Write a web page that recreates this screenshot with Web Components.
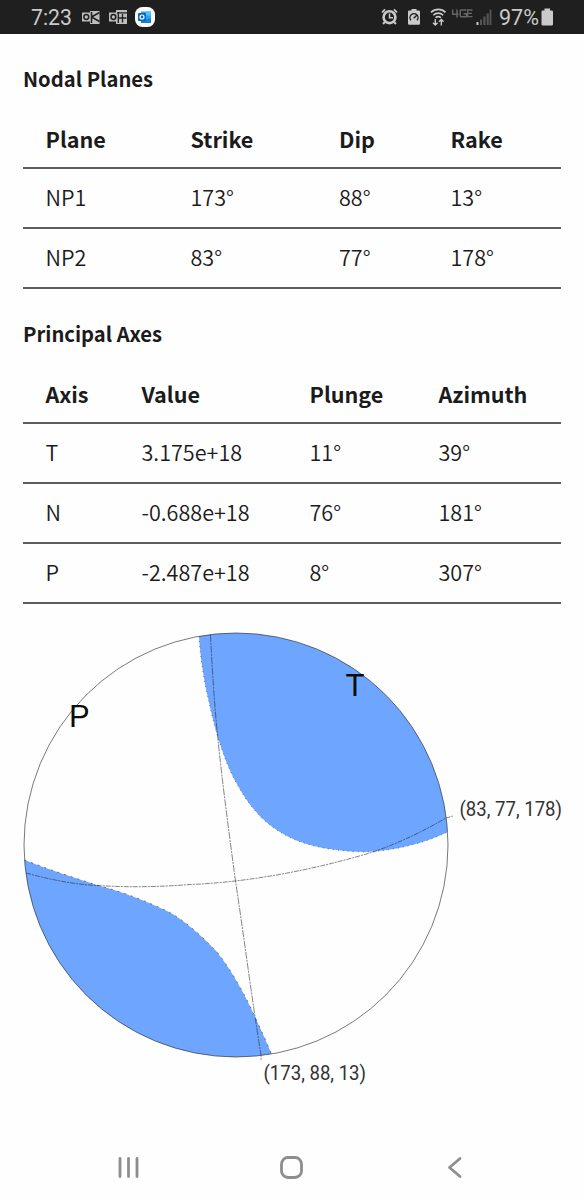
<!DOCTYPE html>
<html lang="en">
<head>
<meta charset="utf-8">
<title>Moment Tensor</title>
<style>
  body {
    margin: 0;
    background: #fefefe;
    color: #1b1b1b;
    font-family: "Noto Sans CJK SC", "Open Sans", sans-serif;
  }
</style>
</head>
<body>
<tensor-screen>
  <status-bar slot="top" time="7:23" battery="97%"></status-bar>
  <data-table heading="Nodal Planes" columns="145px 148.5px 111.5px 1fr">
    <script type="application/json">
      [["Plane", "Strike", "Dip", "Rake"],
       ["NP1", "173°", "88°", "13°"],
       ["NP2", "83°", "77°", "178°"]]
    </script>
  </data-table>
  <data-table heading="Principal Axes" columns="96px 168px 129px 1fr">
    <script type="application/json">
      [["Axis", "Value", "Plunge", "Azimuth"],
       ["T", "3.175e+18", "11°", "39°"],
       ["N", "-0.688e+18", "76°", "181°"],
       ["P", "-2.487e+18", "8°", "307°"]]
    </script>
  </data-table>
  <beach-ball></beach-ball>
  <nav-bar slot="bottom"></nav-bar>
</tensor-screen>

<script>
class TensorScreen extends HTMLElement {
  constructor() {
    super();
    this.attachShadow({ mode: "open" });
    this.shadowRoot.innerHTML = `
      <style>
        :host {
          display: flex;
          flex-direction: column;
          height: 1200px;
          overflow: hidden;
        }
        main {
          flex: 1;
          display: flex;
          flex-direction: column;
          padding: 30px 23px 0;
        }
      </style>
      <slot name="top"></slot>
      <main><slot></slot></main>
      <slot name="bottom"></slot>
    `;
  }
}

class StatusBar extends HTMLElement {
  constructor() {
    super();
    this.attachShadow({ mode: "open" });
    this.shadowRoot.innerHTML = `
      <style>
        :host {
          display: block;
          height: 34px;
          background: #1f1f1f;
          color: #cacaca;
        }
        svg {
          display: block;
        }
        text {
          font-family: Roboto, sans-serif;
          fill: #cacaca;
        }
      </style>
      <svg width="584" height="34" viewBox="0 0 584 34">
        <text id="time" x="31" y="25.3" font-size="21.5" textLength="41" lengthAdjust="spacingAndGlyphs"></text>

        <!-- mail -->
        <path d="M90 11h9.500v13H90z" fill="#bdbdbd"/>
        <path d="M82 12.500h9v9h-9z" fill="#bdbdbd"/>
        <path d="M91.500 12v11M91.500 17l8-4.500M91.500 17l8 4.500" stroke="#1f1f1f" stroke-width="1.500" fill="none"/>
        <circle cx="86.300" cy="17" r="2.400" fill="none" stroke="#1f1f1f" stroke-width="1.500"/>

        <!-- calendar -->
        <path d="M116 10h11v14h-11z" fill="#bdbdbd"/>
        <path d="M109 12.500h9v9h-9z" fill="#bdbdbd"/>
        <path d="M118.300 12v11M117 12.800h10M119 18h7.500M122.500 14v8.500" stroke="#1f1f1f" stroke-width="1.300" fill="none"/>
        <circle cx="113.400" cy="17" r="2.400" fill="none" stroke="#1f1f1f" stroke-width="1.500"/>

        <!-- outlook -->
        <rect x="135" y="7" width="20" height="20" rx="7.500" fill="#fff"/>
        <path d="M141 11.500h10v11h-10z" fill="#2aa4ea"/>
        <path d="M146 11.500h5v4h-5z" fill="#4cc4f6"/>
        <path d="M141 18l5 2 5-2v5h-10z" fill="#1482d8"/>
        <rect x="138" y="13" width="8" height="8" rx="1" fill="#0868bd"/>
        <circle cx="142" cy="17" r="2" fill="none" stroke="#fff" stroke-width="1.200"/>

        <!-- alarm -->
        <g fill="none" stroke="#cacaca">
          <circle cx="389.500" cy="17.200" r="5.900" stroke-width="2.600"/>
          <path d="M389.500 13.500v4.200h3.500" stroke-width="1.500"/>
          <path d="M382 12.500l3-3.200M397 12.500l-3-3.200" stroke-width="1.800"/>
          <path d="M384.800 22l-1.700 2M394.200 22l1.700 2" stroke-width="2"/>
        </g>

        <!-- battery saver -->
        <path d="M411.500 9h5v1.500h2.300q1.200 0 1.200 1.200v11.800q0 1.200-1.200 1.200h-9.600q-1.200 0-1.200-1.200v-11.800q0-1.200 1.200-1.200h2.300z" fill="#cacaca"/>
        <path d="M411 20.300a4 4 0 1 1 6 0M413.700 18.300l2.800-2.800" fill="none" stroke="#1f1f1f" stroke-width="1.400"/>

        <!-- wifi -->
        <g fill="none" stroke="#cacaca" stroke-width="1.600">
          <path d="M431 12.300a10.500 10.500 0 0 1 14.500 0"/>
          <path d="M433.300 15.200a7 7 0 0 1 9.900 0"/>
          <path d="M435.600 17.800a3.600 3.600 0 0 1 5.300 0"/>
          <path d="M435.300 19v6M433 22.700l2.300 2.400 2.300-2.400M441.300 25.500v-6M439 21.800l2.300-2.400 2.300 2.400" stroke-width="1.400"/>
        </g>

        <!-- network -->
        <g fill="none" stroke="#666" stroke-width="1.500">
          <path d="M452.700 9.500v4.800h5.800M457 9.500v8M466.500 10h-5.300q-1 0-1 1v4.700q0 1 1 1h5.300v-3h-3"/>
          <path d="M472.500 10h-4.800v6.700h4.800M468 13.300h4" stroke-width="1.300"/>
        </g>
        <g fill="#555">
          <path d="M480 19.500h2v5.500h-2zM483.300 16.500h2.200v8.500h-2.200zM486.600 13.500h2.200v11.500h-2.200zM489.600 9.500h1.800v15.500h-1.800z"/>
        </g>
        <path d="M476.500 22h2v3h-2z" fill="#cacaca"/>

        <text id="battery" x="499" y="25" font-size="21.500" textLength="40" lengthAdjust="spacingAndGlyphs"></text>
        <path d="M544.500 8.500h5.500v2h1.700q1.300 0 1.300 1.300v12.400q0 1.300-1.300 1.300h-8.900q-1.300 0-1.300-1.300v-12.400q0-1.300 1.300-1.300h1.700z" fill="#cacaca"/>
      </svg>
    `;
  }

  connectedCallback() {
    this.shadowRoot.querySelector("#time").textContent = this.getAttribute("time");
    this.shadowRoot.querySelector("#battery").textContent = this.getAttribute("battery");
  }
}

class DataTable extends HTMLElement {
  constructor() {
    super();
    this.attachShadow({ mode: "open" });
    this.shadowRoot.innerHTML = `
      <style>
        :host {
          display: block;
          margin-bottom: 30px;
        }
        h3 {
          margin: 0 0 19px;
          font-size: 20.2px;
          line-height: 29px;
          font-weight: 700;
        }
        .row {
          display: grid;
          align-items: center;
          box-sizing: border-box;
          height: 60px;
          padding: 0 0 2px 22.5px;
          border-bottom: 2px solid #5e5c5e;
          font-size: 21.6px;
          font-weight: 350;
          line-height: 30px;
        }
        .row.head {
          height: 57px;
          font-weight: 700;
        }
      </style>
      <h3></h3>
      <div class="rows"></div>
    `;
  }

  connectedCallback() {
    this.shadowRoot.querySelector("h3").textContent = this.getAttribute("heading");
    const rows = JSON.parse(this.querySelector("script").textContent);
    rows.forEach((row, index) => this.addRow(row, index === 0));
  }

  addRow(row, isHead) {
    const div = document.createElement("div");
    div.classList.add("row");
    if (isHead) {
      div.classList.add("head");
    }
    div.style.gridTemplateColumns = this.getAttribute("columns");
    row.forEach((cell) => {
      const span = document.createElement("span");
      span.textContent = cell;
      div.appendChild(span);
    });
    this.shadowRoot.querySelector(".rows").appendChild(div);
  }
}

class BeachBall extends HTMLElement {
  constructor() {
    super();
    this.attachShadow({ mode: "open" });
    this.shadowRoot.innerHTML = `
      <style>
        :host {
          display: block;
          margin: -14px -23px 0;
        }
        svg {
          display: block;
        }
        .axis {
          font: 31px "Liberation Sans", Arial, sans-serif;
          fill: #0c0c0c;
        }
        .label {
          font: 20px Roboto, sans-serif;
          fill: #333;
        }
      </style>
      <svg width="584" height="470" viewBox="0 620 584 470">
        <g fill="#6ea6ff">
          <path d="M199 636.300C200 655 204 682 209 702C213 722 224 763 237 784C248 805 263 822 280 832C300 845 329 851 365 852C394 851 425 843 447.600 832A212 212 0 0 0 199 636.300z"/>
          <path d="M24.500 860C50 870 75 878 100 886C127 893 150 903 167 911C184 920 200 934 217 952C233 972 247 999 256 1019C262 1032 267 1043 271.500 1054A212 212 0 0 1 24.500 860z"/>
        </g>
        <g fill="none" stroke="#222" stroke-width="1" stroke-opacity=".55">
          <path d="M199 636.300C200 655 204 682 209 702C213 722 224 763 237 784C248 805 263 822 280 832C300 845 329 851 365 852C394 851 425 843 447.600 832" stroke-dasharray="1 4"/>
          <path d="M24.500 860C50 870 75 878 100 886C127 893 150 903 167 911C184 920 200 934 217 952C233 972 247 999 256 1019C262 1032 267 1043 271.500 1054" stroke-dasharray="2 5"/>
          <circle cx="236" cy="845" r="212" stroke-opacity=".6"/>
          <path d="M210.500 635C212 665 214 700 217.500 735C222 780 229 833 235.500 881C243 930 252 1000 261 1055V1061" stroke-dasharray="7 1 2 1"/>
          <path d="M26 873C55 881 80 885 98 885.500C128 887.500 160 887 190 884.500C206 884 221 882.500 235.500 881C285 875 330 865 373 852C402 842 427 829 446 818L453 816" stroke-dasharray="5 1 2 1"/>
        </g>
        <text class="axis" x="345.500" y="696">T</text>
        <text class="axis" x="69" y="726.500">P</text>
        <text class="label" x="459.500" y="816" textLength="102.500" lengthAdjust="spacingAndGlyphs">(83, 77, 178)</text>
        <text class="label" x="263.500" y="1080" textLength="102.500" lengthAdjust="spacingAndGlyphs">(173, 88, 13)</text>
      </svg>
    `;
  }
}

class NavBar extends HTMLElement {
  constructor() {
    super();
    this.attachShadow({ mode: "open" });
    this.shadowRoot.innerHTML = `
      <style>
        :host {
          display: flex;
          align-items: center;
          justify-content: space-between;
          height: 65px;
          padding: 0 120px 0 116px;
        }
        svg {
          fill: none;
          stroke: #8e8e8e;
          stroke-width: 2.8;
          stroke-linecap: round;
          stroke-linejoin: round;
        }
        .home {
          margin-right: 2px;
        }
      </style>
      <svg width="25" height="25"><path d="M4 3.500v18M12.500 3.500v18M21 3.500v18"/></svg>
      <svg class="home" width="25" height="25"><rect x="2.500" y="2.500" width="20" height="20" rx="6.500"/></svg>
      <svg width="20" height="25"><path d="M16 3.500L5.500 12.500L16 21.500"/></svg>
    `;
  }
}

customElements.define("tensor-screen", TensorScreen);
customElements.define("status-bar", StatusBar);
customElements.define("data-table", DataTable);
customElements.define("beach-ball", BeachBall);
customElements.define("nav-bar", NavBar);
</script>
</body>
</html>
